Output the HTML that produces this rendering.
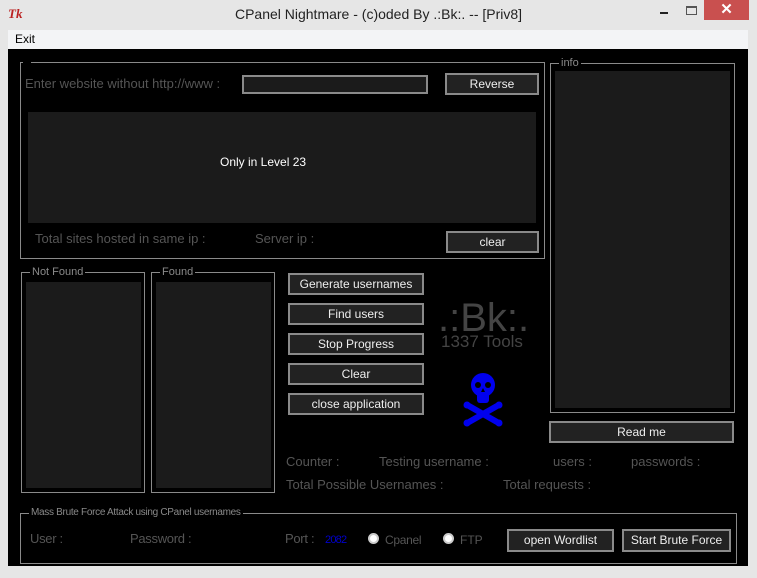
<!DOCTYPE html>
<html><head><meta charset="utf-8"><style>
*{margin:0;padding:0;box-sizing:border-box}
body{width:757px;height:578px;background:#e6e6e6;position:relative;overflow:hidden;font-family:"Liberation Sans",sans-serif}
.a{position:absolute;white-space:nowrap}
.fr{position:absolute;border:1px solid #8a8a8a}
.lb{position:absolute;top:-8px;background:#000;color:#8a8a8a;font-size:11px;padding:0 2px;line-height:14px}
.dk{position:absolute;background:#1b1b1b}
.bt{position:absolute;background:#222;border:2px solid #8a8a8a;color:#eee;font-size:12px;text-align:center;line-height:18px}
.t{position:absolute;white-space:nowrap;color:#555;font-size:13px;line-height:14px}
</style></head><body>
<div class="a" style="left:8px;top:6px;color:#b22;font:italic bold 13px 'Liberation Serif',serif">Tk</div>
<div class="a" style="left:0;width:757px;top:6px;text-align:center;font-size:14px;color:#222">CPanel Nightmare - (c)oded By .:Bk:. -- [Priv8]</div>
<div class="a" style="left:660px;top:12px;width:8px;height:2px;background:#222"></div>
<div class="a" style="left:686px;top:6px;width:11px;height:9px;border:1px solid #555;border-top-width:2px"></div>
<div class="a" style="left:704px;top:0;width:45px;height:20px;background:#c9504f;color:#fff;text-align:center;font-size:15px;line-height:20px;font-weight:bold">✕</div>
<div class="a" style="left:8px;top:30px;width:740px;height:19px;background:#f3f4f6;font-size:12px;line-height:19px;padding-left:7px;color:#000">Exit</div>
<div class="a" style="left:8px;top:49px;width:740px;height:517px;background:#000"></div>

<div class="fr" style="left:20px;top:62px;width:525px;height:197px"><div class="lb" style="left:2px;width:8px;height:10px"></div></div>
<div class="t" style="left:25px;top:77px">Enter website without http://www :</div>
<div class="a" style="left:242px;top:75px;width:186px;height:19px;background:#1b1b1b;border:2px solid #8a8a8a"></div>
<div class="bt" style="left:445px;top:73px;width:94px;height:22px">Reverse</div>
<div class="dk" style="left:28px;top:112px;width:508px;height:111px"></div>
<div class="a" style="left:220px;top:155px;color:#fff;font-size:12px">Only in Level 23</div>
<div class="t" style="left:35px;top:232px">Total sites hosted in same ip :</div>
<div class="t" style="left:255px;top:232px">Server ip :</div>
<div class="bt" style="left:446px;top:231px;width:93px;height:22px">clear</div>

<div class="fr" style="left:550px;top:63px;width:185px;height:350px"><div class="lb" style="left:8px">info</div></div>
<div class="dk" style="left:555px;top:71px;width:175px;height:337px"></div>
<div class="bt" style="left:549px;top:421px;width:185px;height:22px">Read me</div>

<div class="fr" style="left:21px;top:272px;width:124px;height:221px"><div class="lb" style="left:8px">Not Found</div></div>
<div class="dk" style="left:26px;top:282px;width:115px;height:206px"></div>
<div class="fr" style="left:151px;top:272px;width:124px;height:221px"><div class="lb" style="left:8px">Found</div></div>
<div class="dk" style="left:156px;top:282px;width:115px;height:206px"></div>

<div class="bt" style="left:288px;top:273px;width:136px;height:22px">Generate usernames</div>
<div class="bt" style="left:288px;top:303px;width:136px;height:22px">Find users</div>
<div class="bt" style="left:288px;top:333px;width:136px;height:22px">Stop Progress</div>
<div class="bt" style="left:288px;top:363px;width:136px;height:22px">Clear</div>
<div class="bt" style="left:288px;top:393px;width:136px;height:22px">close application</div>

<div class="a" style="left:438px;top:297px;color:#444;font-size:40px;line-height:42px">.:Bk:.</div>
<div class="a" style="left:441px;top:333px;color:#444;font-size:17px;line-height:18px">1337 Tools</div>
<svg class="a" style="left:460px;top:370px" width="46" height="58" viewBox="0 0 46 58">
<g fill="#0000ee"><ellipse cx="23" cy="15" rx="12" ry="12"/><rect x="17" y="22" width="12" height="11" rx="3"/></g>
<g fill="#000"><circle cx="18" cy="15" r="3"/><circle cx="28" cy="15" r="3"/><path d="M23 18l-2 4h4z"/></g>
<g stroke="#0000ee" stroke-width="6" stroke-linecap="round"><path d="M9 36L37 52M37 36L9 52"/></g>
<g fill="#0000ee"><circle cx="7" cy="35" r="3.5"/><circle cx="39" cy="35" r="3.5"/><circle cx="7" cy="53" r="3.5"/><circle cx="39" cy="53" r="3.5"/></g>
</svg>

<div class="t" style="left:286px;top:455px">Counter :</div>
<div class="t" style="left:379px;top:455px">Testing username :</div>
<div class="t" style="left:553px;top:455px">users :</div>
<div class="t" style="left:631px;top:455px">passwords :</div>
<div class="t" style="left:286px;top:478px">Total Possible Usernames :</div>
<div class="t" style="left:503px;top:478px">Total requests :</div>

<div class="fr" style="left:20px;top:513px;width:717px;height:51px"><div class="lb" style="left:8px;font-size:10px;letter-spacing:-0.3px">Mass Brute Force Attack using CPanel usernames</div></div>
<div class="t" style="left:30px;top:532px;letter-spacing:-0.3px">User :</div>
<div class="t" style="left:130px;top:532px;letter-spacing:-0.3px">Password :</div>
<div class="t" style="left:285px;top:532px;letter-spacing:-0.3px">Port :</div>
<div class="a" style="left:325px;top:534px;color:#00c;font-size:11px;letter-spacing:-0.8px">2082</div>
<div class="a" style="left:368px;top:533px;width:11px;height:11px;border-radius:50%;background:#fff;border:2px solid #ccc"></div>
<div class="t" style="left:385px;top:533px;font-size:12px;letter-spacing:-0.3px">Cpanel</div>
<div class="a" style="left:443px;top:533px;width:11px;height:11px;border-radius:50%;background:#fff;border:2px solid #ccc"></div>
<div class="t" style="left:460px;top:533px;font-size:12px">FTP</div>
<div class="bt" style="left:507px;top:529px;width:107px;height:23px;line-height:19px">open Wordlist</div>
<div class="bt" style="left:622px;top:529px;width:109px;height:23px;line-height:19px">Start Brute Force</div>
</body></html>
